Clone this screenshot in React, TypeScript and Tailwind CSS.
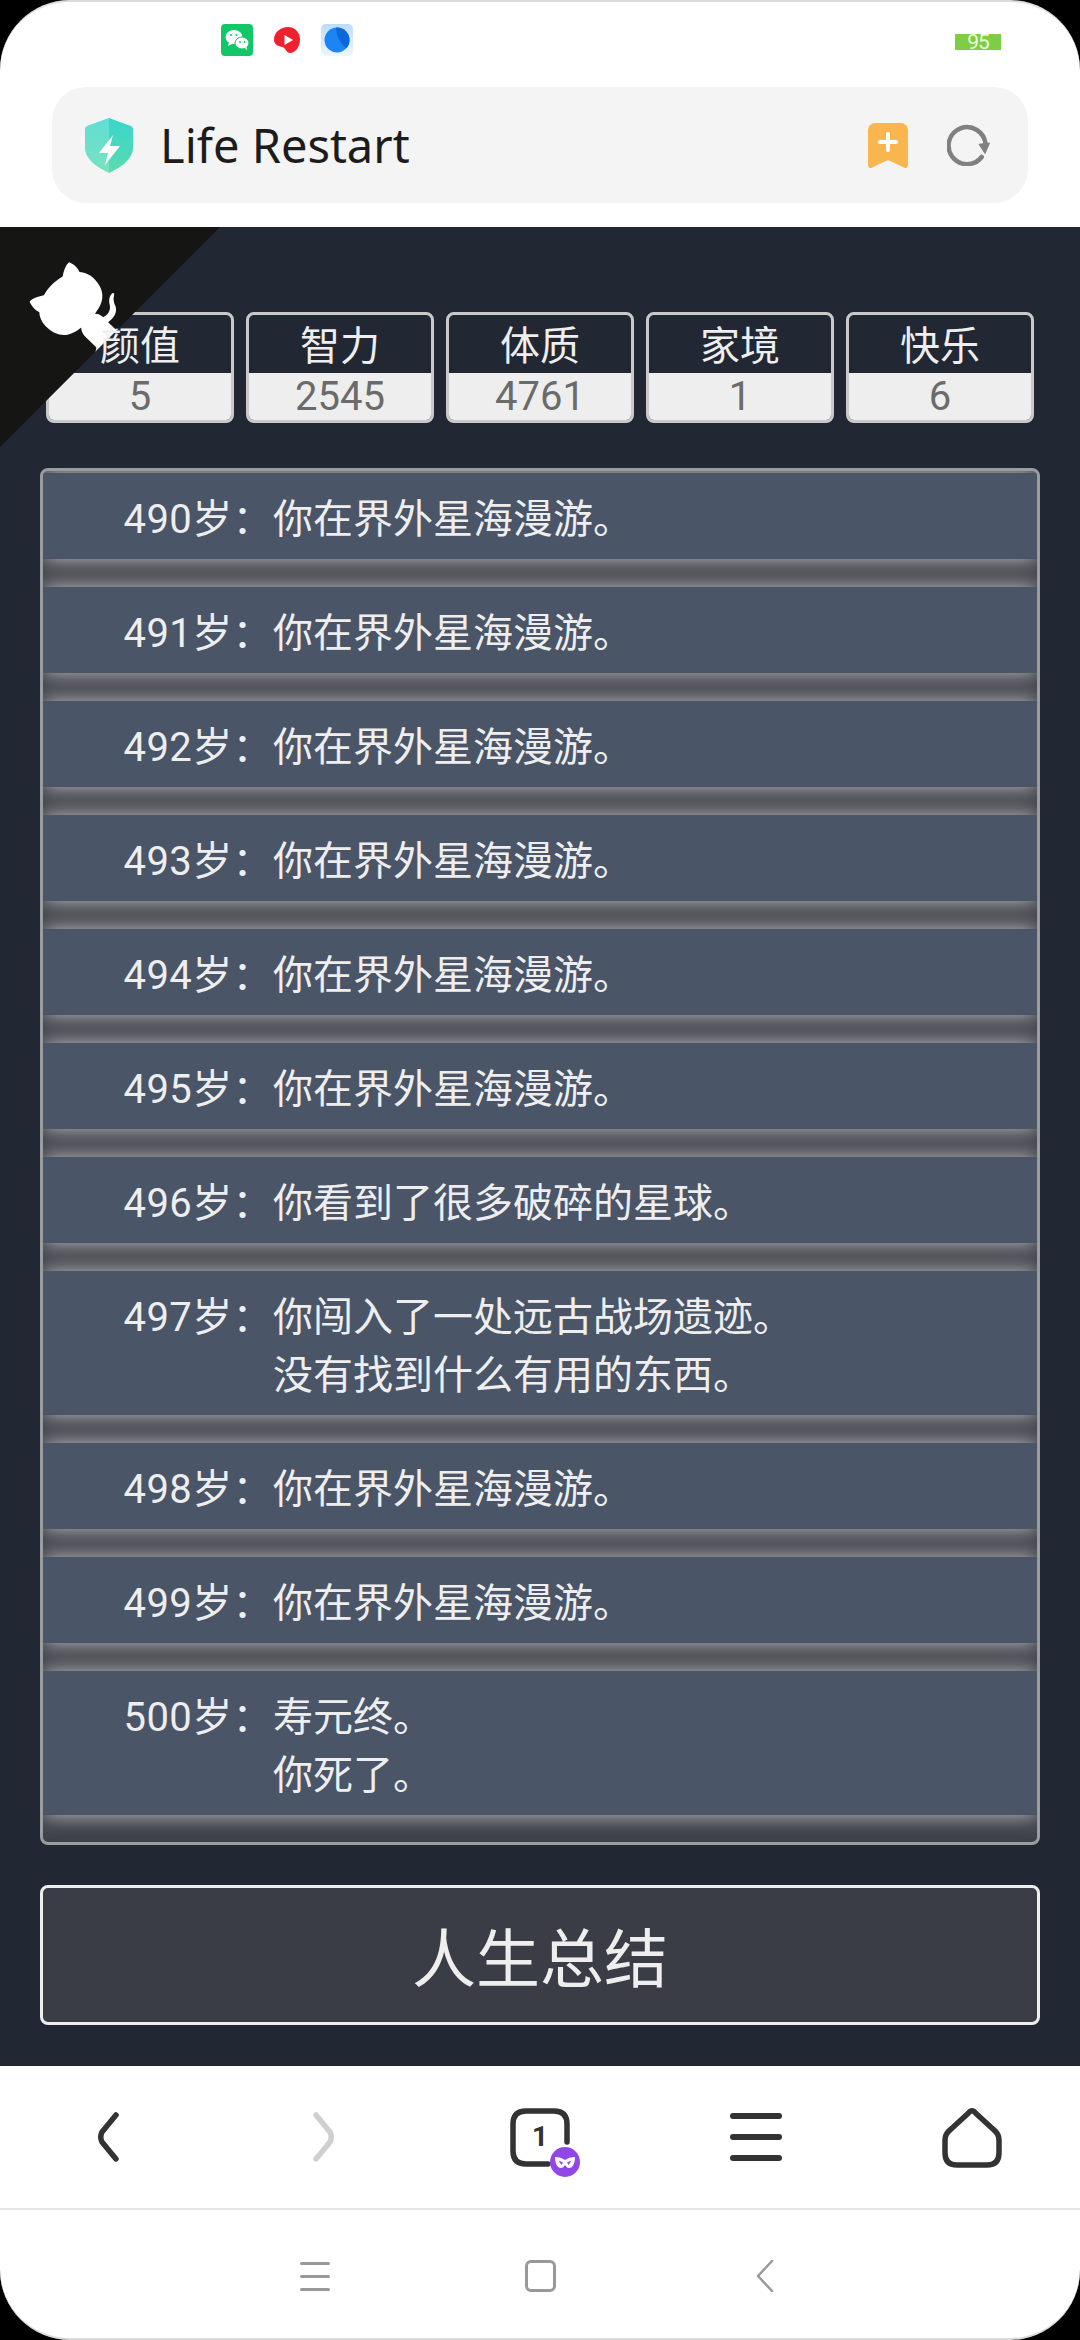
import React from 'react';

const stats = [
  { label: '颜值', value: 5 },
  { label: '智力', value: 2545 },
  { label: '体质', value: 4761 },
  { label: '家境', value: 1 },
  { label: '快乐', value: 6 },
];

const roam = ['你在界外星海漫游。'];

const events = [
  { age: 490, lines: roam },
  { age: 491, lines: roam },
  { age: 492, lines: roam },
  { age: 493, lines: roam },
  { age: 494, lines: roam },
  { age: 495, lines: roam },
  { age: 496, lines: ['你看到了很多破碎的星球。'] },
  { age: 497, lines: ['你闯入了一处远古战场遗迹。', '没有找到什么有用的东西。'] },
  { age: 498, lines: roam },
  { age: 499, lines: roam },
  { age: 500, lines: ['寿元终。', '你死了。'] },
];

function GithubCorner() {
  return (
    <svg viewBox="0 0 250 250" className="absolute left-0 top-0 z-10 h-[220px] w-[220px] -scale-x-100 text-white">
      <path d="M0,0 L115,115 L130,115 L142,142 L250,250 L250,0 Z" fill="#151513" />
      <path
        d="M128.3,109.0 C113.8,99.7 119.0,89.6 119.0,89.6 C122.0,82.7 120.5,78.6 120.5,78.6 C119.2,72.0 123.4,76.3 123.4,76.3 C127.3,80.9 125.5,87.3 125.5,87.3 C122.9,97.6 130.6,101.9 134.4,103.2"
        fill="currentColor"
      />
      <path
        d="M115.0,115.0 C114.9,115.1 118.7,116.5 119.8,115.4 L133.7,101.6 C136.9,99.2 139.9,98.4 142.2,98.6 C133.8,88.0 127.5,74.4 143.8,58.0 C148.5,53.4 154.0,51.2 159.7,51.0 C160.3,49.4 163.2,43.6 171.4,40.1 C171.4,40.1 176.1,42.5 178.8,56.2 C183.1,58.6 187.2,61.8 190.9,65.4 C194.5,69.0 197.7,73.2 200.1,77.6 C213.8,80.2 216.3,84.9 216.3,84.9 C212.7,93.1 206.9,96.0 205.4,96.6 C205.1,102.4 203.0,107.8 198.3,112.5 C181.9,128.9 168.3,122.5 157.7,114.1 C157.9,116.9 156.7,120.9 152.7,124.9 L141.0,136.5 C139.8,137.7 141.6,141.9 141.8,141.8 Z"
        fill="currentColor"
      />
    </svg>
  );
}

function StatusIcons() {
  return (
    <div className="flex items-center gap-[21px]">
      <svg viewBox="0 0 32 32" className="h-8 w-8">
        <rect width="32" height="32" rx="4" fill="#12c767" />
        <ellipse cx="13" cy="13" rx="8.5" ry="7" fill="#fff" />
        <path d="M8 18l-1 4 5-2.5z" fill="#fff" />
        <ellipse cx="21" cy="19" rx="7" ry="6" fill="#fff" stroke="#12c767" strokeWidth="1" />
        <path d="M24 24l2 2.5-.5-4z" fill="#fff" />
        <circle cx="10" cy="11" r="1.1" fill="#12c767" />
        <circle cx="15.5" cy="11" r="1.1" fill="#12c767" />
        <circle cx="19" cy="18" r="0.9" fill="#12c767" />
        <circle cx="23.5" cy="18" r="0.9" fill="#12c767" />
      </svg>
      <svg viewBox="0 0 26 26" className="h-[26px] w-[26px]">
        <path d="M14 0c7 0 12 5.500 12 12.500 0 8-5 13.500-10 13.500-3.500 0-4-4-6.500-5.500C6 19 0 19 0 12.500 0 5 7 0 14 0z" fill="#f0212f" />
        <path d="M10.500 8l8.500 5-8.500 5z" fill="#fff" />
      </svg>
      <svg viewBox="0 0 32 32" className="h-8 w-8">
        <defs>
          <linearGradient id="blueBg" x1="0" y1="0" x2="0" y2="1">
            <stop offset="0" stopColor="#bcdcfd" />
            <stop offset="1" stopColor="#eef6ff" />
          </linearGradient>
        </defs>
        <rect width="32" height="32" rx="5" fill="url(#blueBg)" />
        <circle cx="16" cy="16" r="12.500" fill="#1d84f3" />
        <path d="M15 3.600c7-.8 13.500 5 13.500 12.400 0 3-1 6-3 8-5-3-10-10-10.500-20.400z" fill="#0c66dc" />
      </svg>
    </div>
  );
}

function Shield() {
  return (
    <svg viewBox="0 0 48 55" className="h-[55px] w-12 shrink-0">
      <defs>
        <linearGradient id="shieldFill" x1="0" y1="0" x2="0" y2="1">
          <stop offset="0" stopColor="#38d6cc" />
          <stop offset="1" stopColor="#5adbb0" />
        </linearGradient>
      </defs>
      <path d="M24 0L46 8Q48 9 48 11V30C48 42 34 50 24 55C14 50 0 42 0 30V11Q0 9 2 8Z" fill="url(#shieldFill)" />
      <path d="M24 0L2 8Q0 9 0 11V30C0 42 14 50 24 55Z" fill="#fff" opacity="0.2" />
      <path d="M28 17L14 35H23L20 47L35 28H25Z" fill="#fff" />
    </svg>
  );
}

function Bookmark() {
  return (
    <svg viewBox="0 0 40 45" className="h-[45px] w-10">
      <path d="M7 0H33A7 7 0 0 1 40 7V42C40 45 37 46 35 44L20 37L5 44C3 46 0 45 0 42V7A7 7 0 0 1 7 0Z" fill="#f9b64f" />
      <path d="M20 11V27M12 19H28" stroke="#fff" strokeWidth="4" strokeLinecap="round" />
    </svg>
  );
}

function Reload() {
  return (
    <svg viewBox="0 0 43 42" className="h-[42px] w-[43px]" fill="none">
      <path d="M34.700 33A18.500 18.500 0 1 1 38.500 20" stroke="#808080" strokeWidth="4.500" strokeLinecap="round" />
      <path d="M32 20.300L42.500 19L38 29.500Z" fill="#808080" stroke="#808080" strokeWidth="1" strokeLinejoin="round" />
    </svg>
  );
}

function TabsIcon() {
  return (
    <div className="relative h-[59px] w-[60px]">
      <svg viewBox="0 0 60 59" className="h-[59px] w-[60px]" fill="none">
        <path d="M57 34V16Q57 3 44 3H16Q3 3 3 16V43Q3 56 16 56H38" stroke="#333" strokeWidth="5.500" strokeLinecap="round" />
      </svg>
      <span className="absolute inset-0 flex items-center justify-center text-[28px] font-bold leading-none text-[#333]">1</span>
      <svg viewBox="0 0 30 30" className="absolute left-[40px] top-[39px] h-[30px] w-[30px]">
        <circle cx="15" cy="15" r="15" fill="#9146e8" />
        <path d="M5 10C9 10 12 11 15 13C18 11 21 10 25 10C25 16 23 21 19 21C17 21 16 19 15 18C14 19 13 21 11 21C7 21 5 16 5 10Z" fill="#fff" />
        <path d="M8.500 13.500L13 15.500L11.500 18ZM21.500 13.500L17 15.500L18.500 18Z" fill="#9146e8" />
      </svg>
    </div>
  );
}

function Chevron({ dir, color }: { dir: 'left' | 'right'; color: string }) {
  return (
    <svg viewBox="0 0 22 50" className="h-[50px] w-[22px]" fill="none">
      <path
        d={dir === 'left' ? 'M19 3L5 20Q2.500 25 5 30L19 47' : 'M3 3L17 20Q19.500 25 17 30L3 47'}
        stroke={color}
        strokeWidth="5.500"
        strokeLinecap="round"
        strokeLinejoin="round"
      />
    </svg>
  );
}

export default function App() {
  return (
    <div
      className="h-[2340px] w-[1080px] bg-black"
      style={{ fontFamily: 'Roboto, "Noto Sans CJK SC", sans-serif' }}
    >
      <div className="flex h-full flex-col overflow-hidden rounded-[70px] border-y-2 border-[#dcdcdc] bg-white">
        <header className="h-[225px] shrink-0">
          <div className="flex h-[54px] items-end justify-between pl-[221px] pr-[79px]">
            <StatusIcons />
            <div className="mb-[6px] flex h-4 w-[46px] items-center justify-center bg-[#7dce45] text-[21px] leading-none tracking-tighter text-[#eaf7e0]">95</div>
          </div>
          <div className="mx-[52px] mt-[31px] flex h-[116px] items-center rounded-[34px] bg-[#f4f4f4] pl-[33px] pr-[38px]">
            <Shield />
            <span className="ml-[27px] text-[47px] leading-none text-[#1c1c1c]" style={{ fontFamily: '"Noto Sans", sans-serif' }}>Life Restart</span>
            <div className="ml-auto flex items-center gap-[39px]">
              <Bookmark />
              <Reload />
            </div>
          </div>
        </header>

        <main className="relative flex h-[1839px] shrink-0 flex-col bg-[#212733] px-10 text-[40px]">
          <GithubCorner />

          <div className="ml-[6px] mt-[85px] flex gap-3">
            {stats.map((s) => (
              <div key={s.label} className="w-[188px] overflow-hidden rounded-lg border-[3px] border-[#c9c9c9]">
                <div className="relative z-20 h-[58px] pt-[3px] text-center leading-[58px] text-[#eeeeee]">{s.label}</div>
                <div className="h-[47px] bg-[#eeeeee] text-center leading-[47px] text-[#6b6b6b]">{s.value}</div>
              </div>
            ))}
          </div>

          <ul className="mt-[45px] flex flex-col gap-7 overflow-hidden rounded-lg border-[3px] border-[#9a9c9f] bg-[#3e4149] pb-[27px] pt-0.5">
            {events.map((e) => (
              <li key={e.age} className="flex bg-[#4a5568] pb-[10px] pt-[18px] leading-[58px] text-[#eeeeee] shadow-[0_0_20px_#c8c8c8]">
                <span className="w-[230px] shrink-0 text-right tracking-[0.4px]">{e.age}岁：</span>
                <div>
                  {e.lines.map((line) => (
                    <p key={line}>{line}</p>
                  ))}
                </div>
              </li>
            ))}
          </ul>

          <button className="mt-10 h-[140px] rounded-lg border-[3px] border-[#eeeeee] bg-[#3a3d46] pt-[11px] text-[64px] text-[#eeeeee]">
            人生总结
          </button>
        </main>

        <nav className="grid h-[144px] shrink-0 grid-cols-5 place-items-center border-b-2 border-[#e5e5e5]">
          <Chevron dir="left" color="#333333" />
          <Chevron dir="right" color="#cfcfcf" />
          <TabsIcon />
          <div className="flex flex-col gap-[15px]">
            <div className="h-1.5 w-[52px] rounded-full bg-[#333]" />
            <div className="h-1.5 w-[52px] rounded-full bg-[#333]" />
            <div className="h-1.5 w-[52px] rounded-full bg-[#333]" />
          </div>
          <svg viewBox="0 0 60 61" className="h-[61px] w-[60px]" fill="none">
            <path d="M26 6.500Q30 1 34 6.500L52 23Q57 27 57 33V46Q57 58 45 58H15Q3 58 3 46V33Q3 27 8 23Z" stroke="#333" strokeWidth="5.500" strokeLinejoin="round" />
          </svg>
        </nav>

        <div className="mx-auto grid w-[675px] flex-1 grid-cols-3 place-items-center pt-[4px]">
          <div className="flex flex-col gap-[10px]">
            <div className="h-[3px] w-[30px] rounded-sm bg-[#999]" />
            <div className="h-[3px] w-[30px] rounded-sm bg-[#999]" />
            <div className="h-[3px] w-[30px] rounded-sm bg-[#999]" />
          </div>
          <div className="h-8 w-[31px] rounded-md border-[3px] border-[#999]" />
          <svg viewBox="0 0 18 32" className="h-8 w-[18px]" fill="none">
            <path d="M16 1L2 16L16 31" stroke="#999" strokeWidth="2.500" strokeLinecap="round" strokeLinejoin="round" />
          </svg>
        </div>
      </div>
    </div>
  );
}
